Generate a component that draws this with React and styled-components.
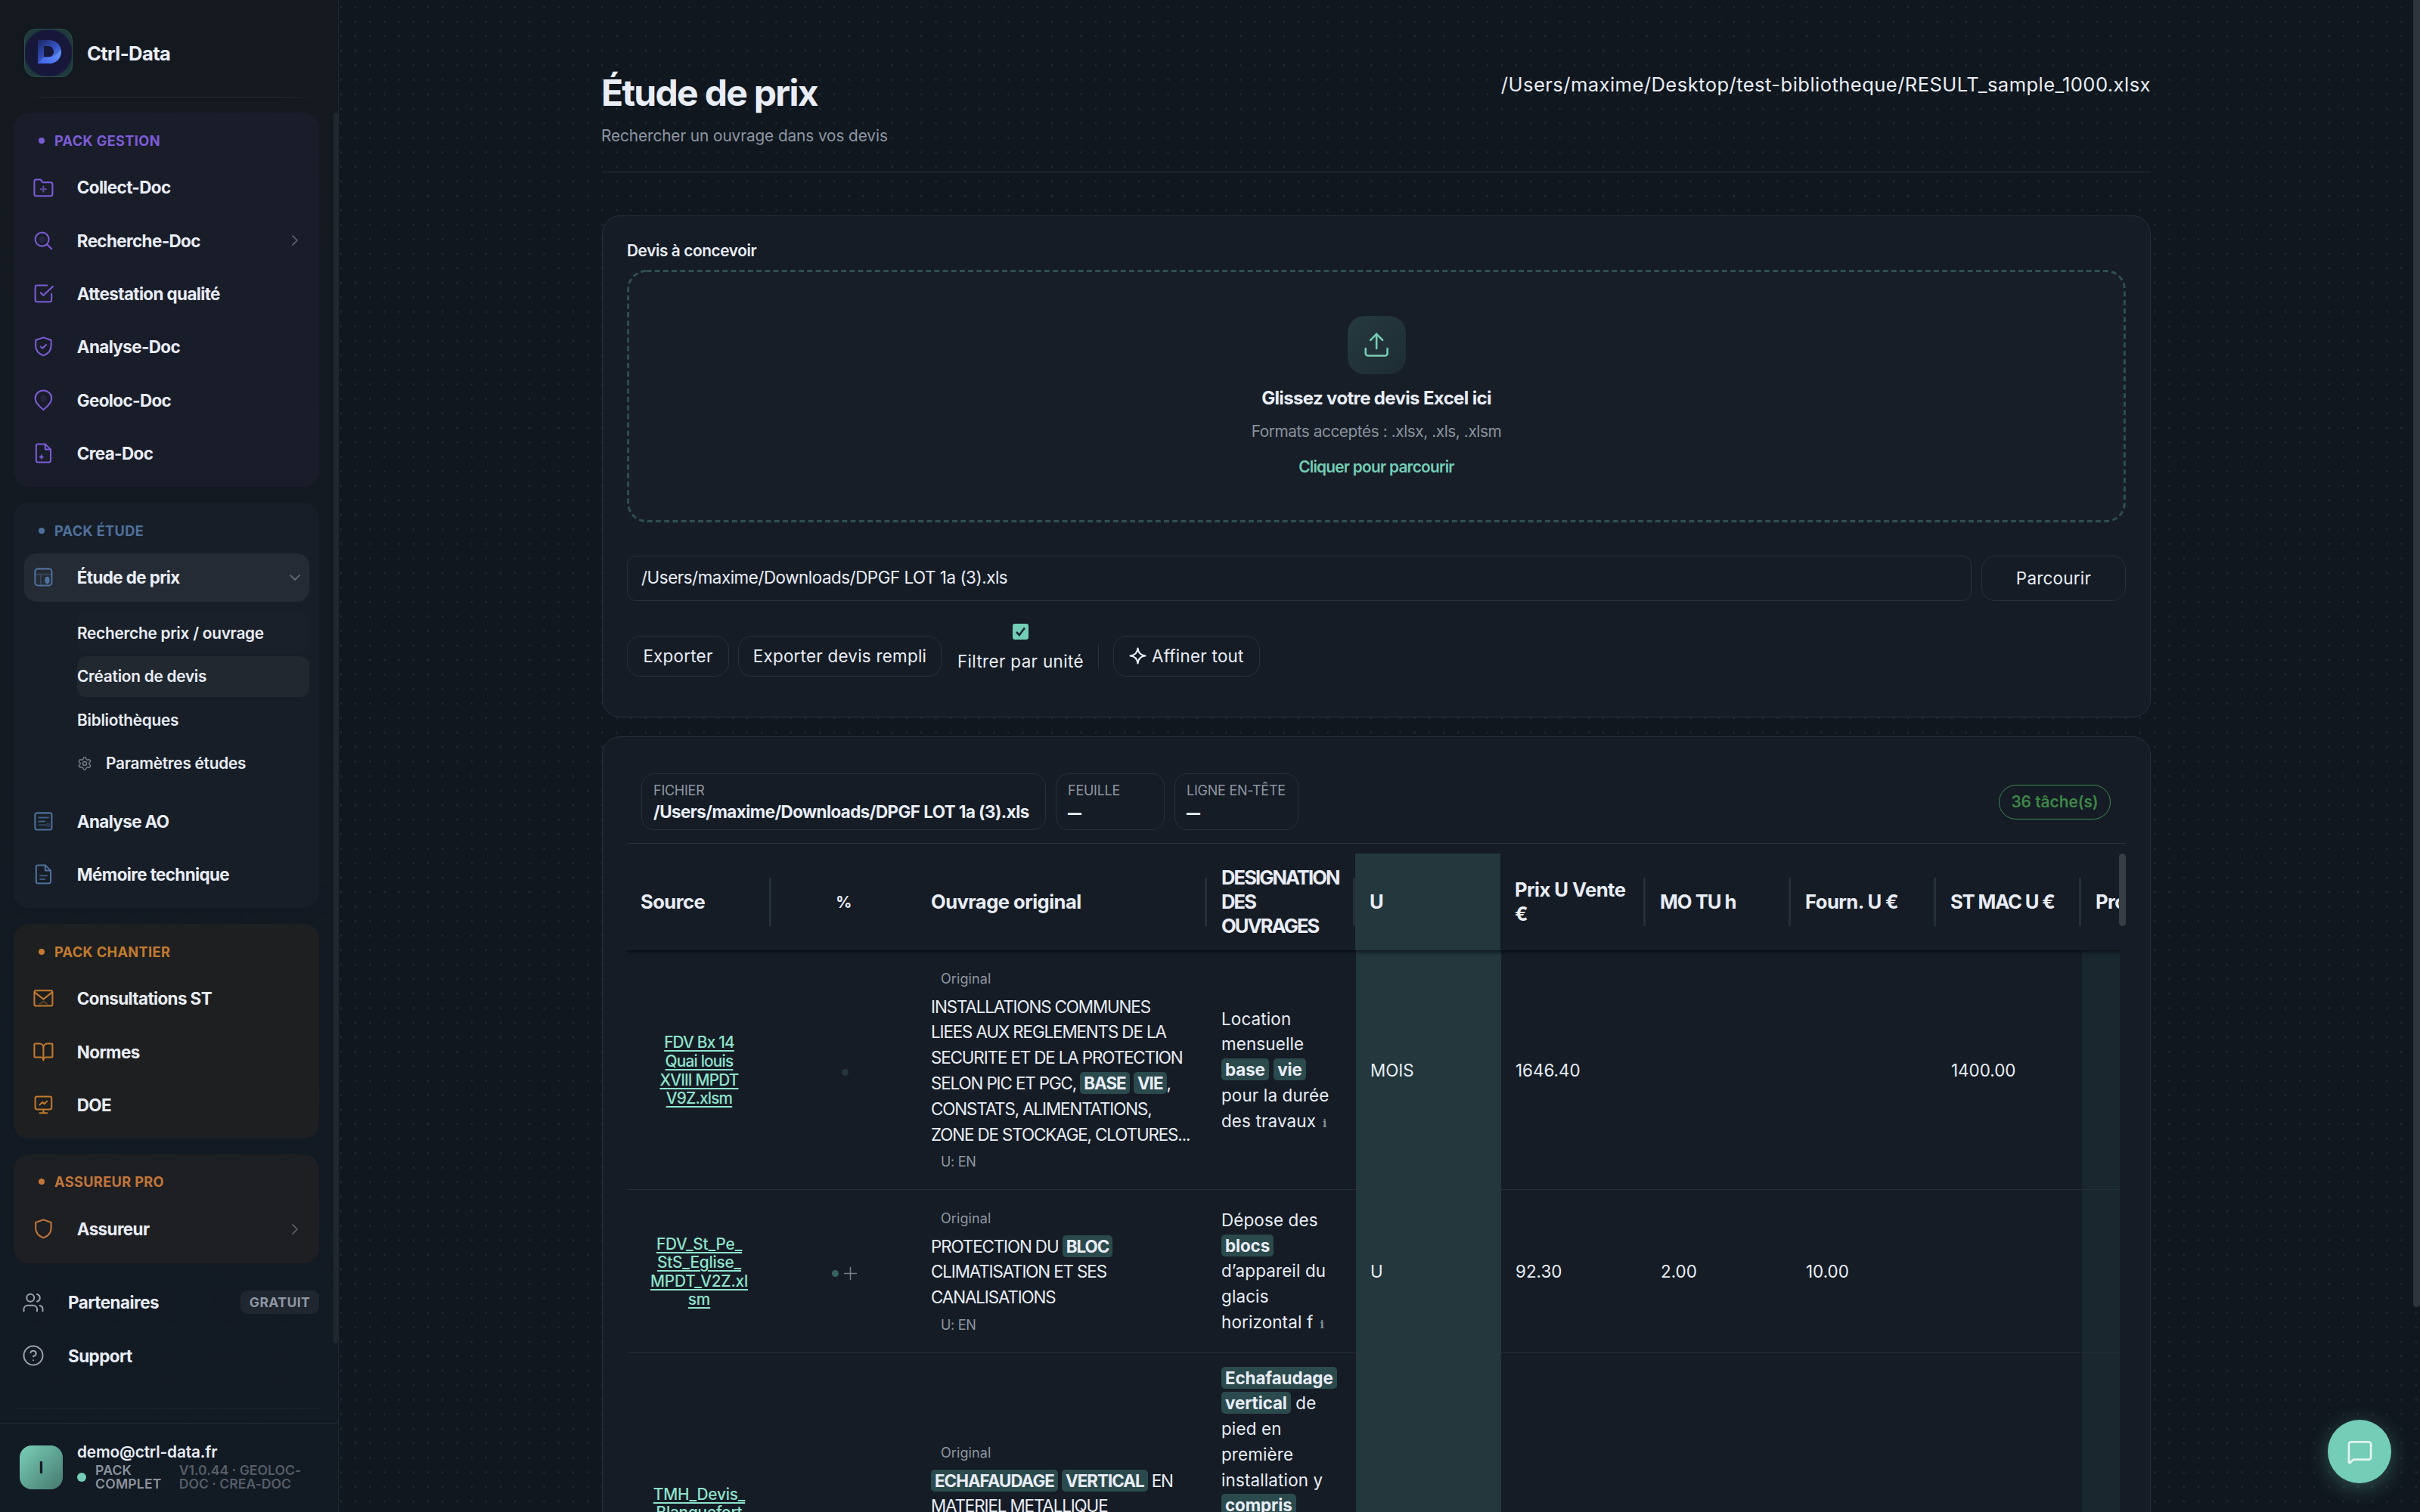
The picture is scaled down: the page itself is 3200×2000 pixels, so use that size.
import React from "react";
import styled, { createGlobalStyle, css } from 'styled-components';
import { Users, CircleHelp, ChevronRight, ChevronDown, Upload, Settings, BookOpen, MessageSquare } from 'lucide-react';

const GlobalStyle = createGlobalStyle`
  * { box-sizing: border-box; }

  body {
    margin: 0;
    background: #10171e;
    color: #e9edf6;
    font-family: Inter, "Liberation Sans", sans-serif;
    font-size: 22.4px;
    font-feature-settings: "calt" 0;
  }
`

const Page = styled.div`
  position: relative;
  display: flex;
  width: 3200px;
  height: 2000px;
  overflow: hidden;
  background: radial-gradient(circle at center, #222930 0.8px, transparent 2px) 0 0 / 19.19px 19.19px, #10171e;
`

/* ---------- sidebar ---------- */

const Sidebar = styled.aside`
  position: relative;
  display: flex;
  flex-direction: column;
  flex: none;
  width: 448px;
  height: 2000px;
  background: linear-gradient(#14191f, #121921 45%, #121a24);
  border-right: 1px solid #212930;
`

const Brand = styled.div`
  display: flex;
  align-items: center;
  gap: 19px;
  height: 64px;
  margin: 38px 32px 0;
  font-size: 25.6px;
  font-weight: 700;
  letter-spacing: -0.6px;
`

const Logo = styled.div`
  display: flex;
  width: 64px;
  height: 64px;
  border: 1px solid #2b4f4c;
  border-radius: 15px;
  background: radial-gradient(circle, #17173a 0 30px, #1f3a3c 33px);
  overflow: hidden;
`

const BrandLine = styled.div`
  height: 1px;
  margin: 26px 32px 20px;
  background: linear-gradient(90deg, transparent, #252c33 10%, #252c33 90%, transparent);
`

const Nav = styled.nav`
  display: flex;
  flex-direction: column;
  gap: 20.3px;
  padding: 0 25px 0 18px;
`

const Group = styled.section`
  display: flex;
  flex-direction: column;
  gap: 6.3px;
  padding: 13px 13px 13px 14px;
  border-radius: 20px;
  background: ${p => p.$bg};
`

const GroupLabel = styled.div`
  display: flex;
  align-items: center;
  gap: 13px;
  height: 47.7px;
  padding: 0 0 0 19px;
  color: ${p => p.$color};
  font-size: 18.2px;
  font-weight: 700;
  letter-spacing: 0.35px;

  &::before {
    content: '';
    width: 8px;
    height: 8px;
    border-radius: 50%;
    background: currentColor;
  }
`

const Item = styled.a`
  display: flex;
  align-items: center;
  height: 64px;
  padding: 0 7px 0 11px;
  border-radius: 16px;
  font-weight: 700;
  letter-spacing: -0.6px;
  background: ${p => p.$active ? '#242b34' : 'transparent'};

  svg { flex: none; }
  svg:first-child { color: ${p => p.$color}; margin-right: 30px; }
  svg:last-child { color: #5e646e; margin-left: auto; }
`

const SubMenu = styled.div`
  display: flex;
  flex-direction: column;
  gap: 3.6px;
  margin: 8px 0 11px 70px;
`

const SubItem = styled.a`
  display: flex;
  align-items: center;
  gap: 18px;
  height: 54px;
  border-radius: 12px;
  font-size: 20.8px;
  font-weight: 600;
  letter-spacing: -0.25px;
  background: ${p => p.$active ? '#21282f' : p.$soft ? '#1a2029' : 'transparent'};

  svg { color: #767c85; }
`

const Extra = styled.div`
  display: flex;
  flex-direction: column;
  gap: 6.3px;
`

const ExtraItem = styled.a`
  display: flex;
  align-items: center;
  height: 64px;
  padding-left: 11px;
  font-weight: 700;
  letter-spacing: -0.5px;

  svg { color: #9aa1ad; margin-right: 31px; }
`

const Free = styled.span`
  margin-left: auto;
  width: 104px;
  border-radius: 9px;
  background: #1f262f;
  color: #8f96a3;
  font-size: 17.6px;
  line-height: 31px;
  letter-spacing: 0.4px;
  text-align: center;
`

const NavEnd = styled.div`
  height: 1px;
  margin: 38px 26px 18px 20px;
  background: #1c242c;
`

const Account = styled.footer`
  display: flex;
  flex: 1;
  gap: 20px;
  padding: 29px 26px 0;
  border-top: 1px solid #222a32;
`

const Avatar = styled.div`
  display: flex;
  align-items: center;
  justify-content: center;
  flex: none;
  width: 57px;
  height: 58px;
  border-radius: 16px;
  background: linear-gradient(135deg, #79cfb7, #46796f);
  color: #10171e;
  font-size: 20.8px;
  font-weight: 700;
`

const AccountText = styled.div`
  margin: -5px 0 0 -1px;
  font-size: 20.8px;
  font-weight: 600;
  letter-spacing: -0.15px;
  line-height: 27px;
`

const Plan = styled.div`
  display: flex;
  align-items: center;
  margin-top: 2px;
  color: #8b929e;
  font-size: 17.6px;
  letter-spacing: 0.2px;
  line-height: 18px;
  white-space: nowrap;

  &::before {
    content: '';
    width: 12px;
    height: 12px;
    margin-right: 12px;
    border-radius: 50%;
    background: #74cdb6;
  }

  span:last-child { margin-left: 23px; color: #565d67; letter-spacing: 0; }
`

const Thumb = styled.div`
  position: absolute;
  top: ${p => p.$top}px;
  right: 0;
  width: ${p => p.$w}px;
  height: ${p => p.$h}px;
  border-radius: ${p => p.$r};
  background: ${p => p.$color};
`

/* ---------- main ---------- */

const Main = styled.main`
  display: flex;
  flex-direction: column;
  width: 2048px;
  margin-left: 348px;
`

const Header = styled.header`
  display: flex;
  justify-content: space-between;
  flex: none;
  height: 228px;
  padding-top: 94px;
  border-bottom: 1px solid #2a3138;

  h1 {
    margin: 0 0 0 -1px;
    font-size: 48px;
    font-weight: 700;
    letter-spacing: -1.7px;
    line-height: 58px;
  }

  p {
    margin: 15px 0 0 -1px;
    color: #8e95a3;
    font-size: 20.8px;
    letter-spacing: -0.1px;
    line-height: 25px;
  }
`

const FilePath = styled.div`
  margin-top: 2px;
  font-size: 25.6px;
  letter-spacing: 0.43px;
  line-height: 32px;
`

const Card = styled.section`
  flex: none;
  height: ${p => p.$h}px;
  margin-top: ${p => p.$mt}px;
  padding: ${p => p.$pt}px 32px 0;
  border: 1px solid #273039;
  border-radius: 24px;
  background: #151c25;
`

const Label = styled.div`
  font-size: 20.8px;
  font-weight: 600;
  letter-spacing: -0.4px;
  line-height: 25px;
`

const DropZone = styled.div`
  position: relative;
  display: flex;
  flex-direction: column;
  align-items: center;
  height: 334px;
  margin-top: 13px;
  padding-top: 61px;
  border-radius: 26px;
  background: #171e27;

  strong {
    margin-top: 17px;
    font-size: 24px;
    font-weight: 700;
    letter-spacing: -0.65px;
    line-height: 29px;
  }

  small {
    margin-top: 17px;
    color: #8b929e;
    font-size: 20.8px;
    letter-spacing: -0.43px;
    line-height: 25px;
  }

  em {
    margin-top: 22px;
    color: #74cdb6;
    font-size: 20.8px;
    font-style: normal;
    font-weight: 600;
    letter-spacing: -0.75px;
    line-height: 25px;
  }
`

const DashFrame = styled.svg`
  position: absolute;
  inset: 0;
  width: 100%;
  height: 100%;
`

const UploadBox = styled.div`
  display: flex;
  align-items: center;
  justify-content: center;
  width: 77px;
  height: 77px;
  border-radius: 22px;
  background: linear-gradient(135deg, #263a3f, #1d2c33);
  color: #78cdb6;
`

const FileRow = styled.div`
  display: flex;
  gap: 13px;
  height: 60px;
  margin-top: 43.5px;
`

const PathInput = styled.input`
  flex: 1;
  padding: 0 19px 2px 18px;
  border: 1px solid #273039;
  border-radius: 12px;
  background: transparent;
  color: inherit;
  font: inherit;
  letter-spacing: -0.47px;
`

const Button = styled.button`
  display: flex;
  align-items: center;
  justify-content: center;
  gap: 7px;
  height: ${p => p.$h || 54}px;
  width: ${p => p.$w}px;
  padding: 0;
  border: 1px solid #273039;
  border-radius: 18px;
  background: transparent;
  color: inherit;
  font: inherit;
  letter-spacing: 0.25px;
  white-space: nowrap;
`

const Actions = styled.div`
  display: flex;
  align-items: center;
  gap: 12px;
  height: 85px;
  margin-top: 30.5px;
`

const UnitFilter = styled.label`
  display: flex;
  flex-direction: column;
  align-items: center;
  gap: 15px;
  height: 85px;
  margin: 0 7px 0 9px;
  letter-spacing: 0.35px;
  line-height: 27px;
`

const Checkbox = styled.span`
  display: flex;
  align-items: center;
  justify-content: center;
  width: 21px;
  height: 21px;
  border-radius: 3px;
  background: #74cdb6;
`

const Divider = styled.div`
  width: 1px;
  height: 32px;
  margin-right: 7px;
  background: #29313a;
`

const InfoBar = styled.div`
  display: flex;
  align-items: flex-start;
  gap: 13px;
  height: 93px;
  padding: 0 20px 0 19px;
  border-bottom: 1px solid #2a3139;
`

const Chip = styled.div`
  width: ${p => p.$w}px;
  height: 75px;
  padding: 9px 0 0 15px;
  border: 1px solid #273039;
  border-radius: 17px;
  font-weight: 700;
  letter-spacing: -0.55px;
  line-height: 31px;
  white-space: nowrap;

  span {
    display: block;
    color: #8e95a2;
    font-size: 18px;
    font-weight: 400;
    letter-spacing: -0.25px;
    line-height: 25px;
  }

  b {
    font-size: 18px;
    font-weight: 900;
  }
`

const Badge = styled.div`
  margin: 15px 0 0 auto;
  width: 148px;
  border: 1.5px solid #3d8a50;
  border-radius: 24px;
  color: #3d8747;
  font-size: 20.8px;
  font-weight: 600;
  line-height: 44px;
  text-align: center;
`

/* ---------- table ---------- */

const TableBox = styled.div`
  position: relative;
  margin-top: 13px;
`

const Table = styled.div`
  width: 1974px;
  overflow: hidden;
`

const columns = '192px 192px 384px 196px repeat(6, 192px)'

const HeadRow = styled.div`
  position: relative;
  display: grid;
  grid-template-columns: ${columns};
  width: 2116px;
  height: 128px;
  margin-left: -1px;
  background: #151c25;
  box-shadow: 0 2px 5px rgba(4, 8, 12, 0.8);
`

const HeadCell = styled.div`
  position: relative;
  display: flex;
  align-items: center;
  justify-content: ${p => p.$center ? 'center' : 'flex-start'};
  padding: ${p => p.$center ? '2px 1px 0 0' : '0 0 0 19px'};
  background: ${p => p.$unit ? '#23373c' : 'transparent'};
  font-size: ${p => p.$center ? 20.8 : 25.6}px;
  font-weight: 700;
  letter-spacing: ${p => p.$ls || -0.55}px;
  line-height: 32px;
  white-space: pre;

  ${p => p.$bar && css`
    &::after {
      content: '';
      position: absolute;
      top: 32px;
      right: 0;
      width: 3px;
      height: 64px;
      background: #262e38;
    }
  `}
`

const Row = styled.div`
  display: grid;
  grid-template-columns: ${columns};
  width: 2116px;
  height: ${p => p.$h}px;
`

const Cell = styled.div`
  display: flex;
  flex-direction: column;
  justify-content: ${p => p.$top ? 'flex-start' : 'center'};
  padding: ${p => p.$top || p.$drop || 0}px 0 0 ${p => p.$pad ?? 19}px;
  border-bottom: 1px solid ${p => p.$unit ? '#23373c' : '#252e37'};
  background: ${p => p.$unit ? '#23373c' : p.$tint ? '#19272e' : 'transparent'};
`

const SourceLink = styled.div`
  margin-left: -1px;
  color: #8fe3cc;
  font-size: 20.8px;
  font-weight: 500;
  letter-spacing: ${p => p.$ls}px;
  line-height: 24.6px;
  text-align: center;
  text-decoration: underline;
  text-decoration-thickness: 2px;
  text-underline-offset: 3px;
  white-space: pre-line;
`

const Score = styled.div`
  display: flex;
  align-items: center;
  justify-content: center;
  gap: 5px;
  padding-top: 7px;

  &::before {
    content: '';
    width: 9px;
    height: 9px;
    border-radius: 50%;
    background: ${p => p.$color};
  }
`

const Lines = styled.div`
  margin-left: -1px;
  letter-spacing: ${p => p.$caps ? -1.12 : 0.15}px;
  line-height: 33.8px;
  white-space: nowrap;

  mark {
    padding: 1px 5px;
    border-radius: 5px;
    background: #2b4a4d;
    color: inherit;
    font-weight: 700;
    letter-spacing: ${p => p.$caps ? -1 : -0.1}px;
  }
`

const Hint = styled.div`
  padding-left: 12px;
  color: #8e95a2;
  font-size: 18px;
  letter-spacing: ${p => p.$tight ? -0.3 : 0.1}px;
  line-height: 40px;
`

const Info = styled.span`
  margin-left: 9px;
  color: #858c96;
  font-family: "DejaVu Serif", serif;
  font-size: 14px;
  font-weight: 700;
`

const ChatButton = styled.button`
  position: absolute;
  left: 3078px;
  top: 1878px;
  display: flex;
  align-items: center;
  justify-content: center;
  width: 84px;
  height: 84px;
  padding: 0;
  border: 0;
  border-radius: 50%;
  background: #74cdb6;
  color: #e3f4f0;
  box-shadow: 0 6px 28px rgba(116, 205, 182, 0.32);
`

/* ---------- icons ---------- */

const Svg = ({ size = 28.8, sw = 1.7, children }) => (
  <svg width={size} height={size} viewBox='0 0 24 24' fill='none' stroke='currentColor' strokeWidth={sw} strokeLinecap='round' strokeLinejoin='round'>
    {children}
  </svg>
)

const filePath = 'M14 2H6a2 2 0 0 0-2 2v16a2 2 0 0 0 2 2h12a2 2 0 0 0 2-2V8z'
const shieldPath = 'M12 2 20.5 5v6.5c0 5-3.5 8.5-8.5 10.5-5-2-8.5-5.5-8.5-10.5V5z'

const CollectIcon = () => (
  <Svg>
    <path d='M22 19a2 2 0 0 1-2 2H4a2 2 0 0 1-2-2V5a2 2 0 0 1 2-2h5l2 3h9a2 2 0 0 1 2 2z' />
    <path d='M12 10.500v6M9 13.500h6' opacity='.7' />
  </Svg>
)
const SearchIcon = () => (
  <Svg>
    <circle cx='10.500' cy='10.500' r='7.500' />
    <circle cx='10.500' cy='10.500' r='3.500' fill='currentColor' stroke='none' opacity='.15' />
    <path d='m21 21-5-5' />
  </Svg>
)
const CheckIcon = () => (
  <Svg>
    <path d='m9 11 3 3L22.500 4' />
    <path d='M21 12v7a2 2 0 0 1-2 2H5a2 2 0 0 1-2-2V5a2 2 0 0 1 2-2h11' />
  </Svg>
)
const ShieldCheckIcon = () => <Svg><path d={shieldPath} /><path d='m9 12 2 2 4-4' /></Svg>
const ShieldIcon = () => <Svg><path d={shieldPath} /></Svg>
const PinIcon = () => (
  <Svg>
    <path d='M12 22.500c-2.500-2-9-7-9-12.500a9 8.800 0 0 1 18 0c0 5.500-6.500 10.500-9 12.500z' />
    <circle cx='12' cy='10' r='3.500' fill='currentColor' stroke='none' opacity='.15' />
  </Svg>
)
const CreaIcon = () => (
  <Svg>
    <path d={filePath} />
    <path d='M14 2v6h6' />
    <path d='m9.800 13.500.8 1.900 1.900.8-1.900.8-.8 1.900-.8-1.900-1.900-.8 1.900-.8z' fill='currentColor' strokeWidth='.5' />
  </Svg>
)
const PriceIcon = () => (
  <Svg>
    <rect x='2.800' y='2.800' width='18.400' height='18.400' rx='3' />
    <path d='M3 9h18M9 9v12' opacity='.4' />
    <ellipse cx='16.200' cy='15.500' rx='2.700' ry='4' fill='currentColor' stroke='none' />
  </Svg>
)
const TenderIcon = () => (
  <Svg>
    <rect x='2.800' y='2.800' width='18.400' height='18.400' rx='2' />
    <path d='M7 8h10.500M7 12h6.500' opacity='.8' />
    <path d='M7 16h7' opacity='.5' />
    <circle cx='17' cy='16' r='2.500' fill='currentColor' stroke='none' opacity='.3' />
  </Svg>
)
const MemoIcon = () => (
  <Svg>
    <path d={filePath} />
    <path d='M14 2v6h6' />
    <path d='M8.500 13.500h7.500M8.500 17.500h5' opacity='.7' />
  </Svg>
)
const MailIcon = () => (
  <Svg>
    <rect x='2' y='3.500' width='20' height='17' rx='2' />
    <path d='m2.500 5.500 9.500 7.500 9.500-7.500' />
    <path d='m8 18.500 4-3 4 3' opacity='.35' />
  </Svg>
)
const BookIcon = () => <BookOpen size={28.8} strokeWidth={1.7} />
const ScreenIcon = () => (
  <Svg>
    <rect x='3' y='3' width='18' height='14' rx='2' />
    <path d='M8 21h8M12 17v4M8 12l3-3 2 2 3-3' />
  </Svg>
)

const DLogo = () => (
  <svg width='62' height='62' viewBox='0 0 62 62'>
    <defs>
      <linearGradient id='d1' x1='0' y1='0' x2='1' y2='1'>
        <stop offset='0' stopColor='#1d2560' />
        <stop offset='.55' stopColor='#3656c8' />
        <stop offset='1' stopColor='#6fa0ff' />
      </linearGradient>
      <linearGradient id='d2' x1='0' y1='1' x2='1' y2='0'>
        <stop offset='0' stopColor='#3f5fe8' />
        <stop offset='1' stopColor='#6c9bf8' />
      </linearGradient>
    </defs>
    <path d='M17 14h15c9 0 16 6.500 16 15.500S41 45 32 45H17l8-8.500h6c4 0 7-3 7-7s-3-7.500-7-7.500h-6v14.500L17 45z' fill='url(#d1)' />
    <path d='M17 45l8-8.500h6c7 0 14-4 16.500-10C49 37 42 45 32 45z' fill='url(#d2)' />
  </svg>
)

/* ---------- data ---------- */

const packs = [
  {
    label: 'PACK GESTION', color: '#7c5cd6', bg: '#191d2a', items: [
      { icon: CollectIcon, text: 'Collect-Doc' },
      { icon: SearchIcon, text: 'Recherche-Doc', more: true },
      { icon: CheckIcon, text: 'Attestation qualité' },
      { icon: ShieldCheckIcon, text: 'Analyse-Doc' },
      { icon: PinIcon, text: 'Geoloc-Doc' },
      { icon: CreaIcon, text: 'Crea-Doc' },
    ]
  },
  {
    label: 'PACK ÉTUDE', color: '#4f709b', bg: '#171e27', items: [
      { icon: PriceIcon, text: 'Étude de prix', open: true },
      { icon: TenderIcon, text: 'Analyse AO' },
      { icon: MemoIcon, text: 'Mémoire technique' },
    ]
  },
  {
    label: 'PACK CHANTIER', color: '#c27a2e', bg: '#1e1f20', items: [
      { icon: MailIcon, text: 'Consultations ST' },
      { icon: BookIcon, text: 'Normes' },
      { icon: ScreenIcon, text: 'DOE' },
    ]
  },
  {
    label: 'ASSUREUR PRO', color: '#c2763a', bg: '#1e1f22', items: [
      { icon: ShieldIcon, text: 'Assureur', more: true },
    ]
  },
]

const heads = [
  { text: 'Source', bar: true },
  { text: '%', center: true },
  { text: 'Ouvrage original', bar: true },
  { text: 'DESIGNATION\nDES\nOUVRAGES', bar: true, ls: -1.95 },
  { text: 'U', unit: true },
  { text: 'Prix U Vente\n€', bar: true },
  { text: 'MO TU h', bar: true, ls: -1 },
  { text: 'Fourn. U €', bar: true },
  { text: 'ST MAC U €', bar: true, ls: -1.15 },
  { text: 'Prod' },
]

// words between * are the ones found by the search
const rows = [
  {
    h: 317, source: 'FDV Bx 14\nQuai louis\nXVIII MPDT\nV9Z.xlsm', ls: -0.8, score: '#24343b',
    original: ['INSTALLATIONS COMMUNES', 'LIEES AUX REGLEMENTS DE LA', 'SECURITE ET DE LA PROTECTION', 'SELON PIC ET PGC, *BASE* *VIE*,', 'CONSTATS, ALIMENTATIONS,', 'ZONE DE STOCKAGE, CLOTURES...'],
    designation: ['Location', 'mensuelle', '*base* *vie*', 'pour la durée', 'des travaux'],
    values: ['MOIS', '1646.40', '', '', '1400.00'], info: true,
  },
  {
    h: 215.5, source: 'FDV_St_Pe_\nStS_Eglise_\nMPDT_V2Z.xl\nsm', ls: -0.2, score: '#38625f', plus: true,
    original: ['PROTECTION DU *BLOC*', 'CLIMATISATION ET SES', 'CANALISATIONS'],
    designation: ['Dépose des', '*blocs*', 'd’appareil du', 'glacis', 'horizontal f'],
    values: ['U', '92.30', '2.00', '10.00', ''], info: true,
  },
  {
    h: 438, source: 'TMH_Devis_\nBlanquefort', ls: -0.2, score: 'transparent', tops: [175, 112, 16],
    original: ['*ECHAFAUDAGE* *VERTICAL* EN', 'MATERIEL METALLIQUE'],
    designation: ['*Echafaudage*', '*vertical* de', 'pied en', 'première', 'installation y', '*compris*'],
    values: ['', '', '', '', ''],
  },
]

const Marked = ({ text }) => text.split('*').map((part, i) => i % 2 ? <mark key={i}>{part}</mark> : part)

const Pack = ({ pack }) => (
  <Group $bg={pack.bg}>
    <GroupLabel $color={pack.color}>{pack.label}</GroupLabel>
    {pack.items.map(({ icon: Icon, text, more, open }) => (
      <React.Fragment key={text}>
        <Item $color={pack.color} $active={open}>
          <Icon />
          <span>{text}</span>
          {more && <ChevronRight size={24} strokeWidth={1.7} />}
          {open && <ChevronDown size={24} strokeWidth={2} />}
        </Item>
        {open && (
          <SubMenu>
            <SubItem $soft>Recherche prix / ouvrage</SubItem>
            <SubItem $active>Création de devis</SubItem>
            <SubItem>Bibliothèques</SubItem>
            <SubItem><Settings size={20} strokeWidth={1.8} />Paramètres études</SubItem>
          </SubMenu>
        )}
      </React.Fragment>
    ))}
  </Group>
)

const QuoteRow = ({ row }) => {
  const [sourceTop, originalTop, designationTop] = row.tops || []

  return (
    <Row $h={row.h}>
      <Cell $pad={0} $top={sourceTop} $drop={3}><SourceLink $ls={row.ls}>{row.source}</SourceLink></Cell>
      <Cell $pad={0}>
        <Score $color={row.score}>
          {row.plus && <Svg size={21} sw={1.8}><g stroke='#767d87'><path d='M12 3v18M3 12h18' /></g></Svg>}
        </Score>
      </Cell>
      <Cell $top={originalTop} $drop={2}>
        <Hint>Original</Hint>
        <Lines $caps>
          {row.original.map(l => <div key={l}><Marked text={l} /></div>)}
        </Lines>
        <Hint $tight>U: EN</Hint>
      </Cell>
      <Cell $top={designationTop} $drop={4}>
        <Lines>
          {row.designation.map((l, i) => (
            <div key={l}>
              <Marked text={l} />
              {row.info && i === row.designation.length - 1 && <Info>i</Info>}
            </div>
          ))}
        </Lines>
      </Cell>
      {row.values.map((v, i) => <Cell key={i} $unit={i === 0}>{v}</Cell>)}
      <Cell $tint />
    </Row>
  )
}

const App = () => {
  return (
    <>
      <GlobalStyle />
      <Page>
        <Sidebar>
          <Brand><Logo><DLogo /></Logo>Ctrl-Data</Brand>
          <BrandLine />
          <Nav>
            {packs.map(p => <Pack key={p.label} pack={p} />)}
            <Extra>
              <ExtraItem><Users size={30} strokeWidth={1.6} />Partenaires<Free>GRATUIT</Free></ExtraItem>
              <ExtraItem><CircleHelp size={30} strokeWidth={1.6} />Support</ExtraItem>
            </Extra>
          </Nav>
          <NavEnd />
          <Account>
            <Avatar>I</Avatar>
            <AccountText>
              demo@ctrl-data.fr
              <Plan>
                <span>PACK<br />COMPLET</span>
                <span>V1.0.44 · GEOLOC-<br />DOC · CREA-DOC</span>
              </Plan>
            </AccountText>
          </Account>
          <Thumb $top={149} $w={6} $h={1628} $r='4px' $color='#20272e' />
        </Sidebar>

        <Main>
          <Header>
            <div>
              <h1>Étude de prix</h1>
              <p>Rechercher un ouvrage dans vos devis</p>
            </div>
            <FilePath>/Users/maxime/Desktop/test-bibliotheque/RESULT_sample_1000.xlsx</FilePath>
          </Header>

          <Card $h={664} $mt={57} $pt={33}>
            <Label>Devis à concevoir</Label>
            <DropZone>
              <DashFrame>
                <rect x='1.600' y='1.600' width='1978.800' height='330.800' rx='24' fill='none' stroke='#2f4f52' strokeWidth='3' strokeDasharray='6.800 4.400' />
              </DashFrame>
              <UploadBox><Upload size={38.4} strokeWidth={1.6} /></UploadBox>
              <strong>Glissez votre devis Excel ici</strong>
              <small>Formats acceptés : .xlsx, .xls, .xlsm</small>
              <em>Cliquer pour parcourir</em>
            </DropZone>
            <FileRow>
              <PathInput defaultValue='/Users/maxime/Downloads/DPGF LOT 1a (3).xls' />
              <Button $w={191} $h={60}>Parcourir</Button>
            </FileRow>
            <Actions>
              <Button $w={135}>Exporter</Button>
              <Button $w={269}>Exporter devis rempli</Button>
              <UnitFilter>
                <Checkbox>
                  <svg width='15' height='15' viewBox='0 0 15 15' fill='none' stroke='#1d2b33' strokeWidth='2.600'><path d='M2 8l3.800 4L13 2.500' /></svg>
                </Checkbox>
                Filtrer par unité
              </UnitFilter>
              <Divider />
              <Button $w={194}>
                <Svg size={23} sw={2.2}><path d='M12 1.500c.6 6 4 9.900 10.500 10.500-6.500.6-9.900 4.500-10.500 10.500-.6-6-4-9.900-10.500-10.500 6.500-.6 9.900-4.500 10.500-10.500z' /></Svg>
                Affiner tout
              </Button>
            </Actions>
          </Card>

          <Card $h={1100} $mt={25} $pt={48}>
            <InfoBar>
              <Chip $w={535}><span>FICHIER</span>/Users/maxime/Downloads/DPGF LOT 1a (3).xls</Chip>
              <Chip $w={144}><span>FEUILLE</span><b>—</b></Chip>
              <Chip $w={164}><span>LIGNE EN-TÊTE</span><b>—</b></Chip>
              <Badge>36 tâche(s)</Badge>
            </InfoBar>
            <TableBox>
              <Table>
                <HeadRow>
                  {heads.map(h => <HeadCell key={h.text} $bar={h.bar} $center={h.center} $unit={h.unit} $ls={h.ls}>{h.text}</HeadCell>)}
                </HeadRow>
                {rows.map(r => <QuoteRow key={r.source} row={r} />)}
              </Table>
              <Thumb $top={0} $w={9} $h={96} $r='5px' $color='#363d45' />
            </TableBox>
          </Card>
        </Main>

        <Thumb $top={-10} $w={9} $h={1739} $r='5px' $color='#2e343b' />
        <ChatButton><MessageSquare size={35} strokeWidth={1.9} /></ChatButton>
      </Page>
    </>
  )
}

export default App;
